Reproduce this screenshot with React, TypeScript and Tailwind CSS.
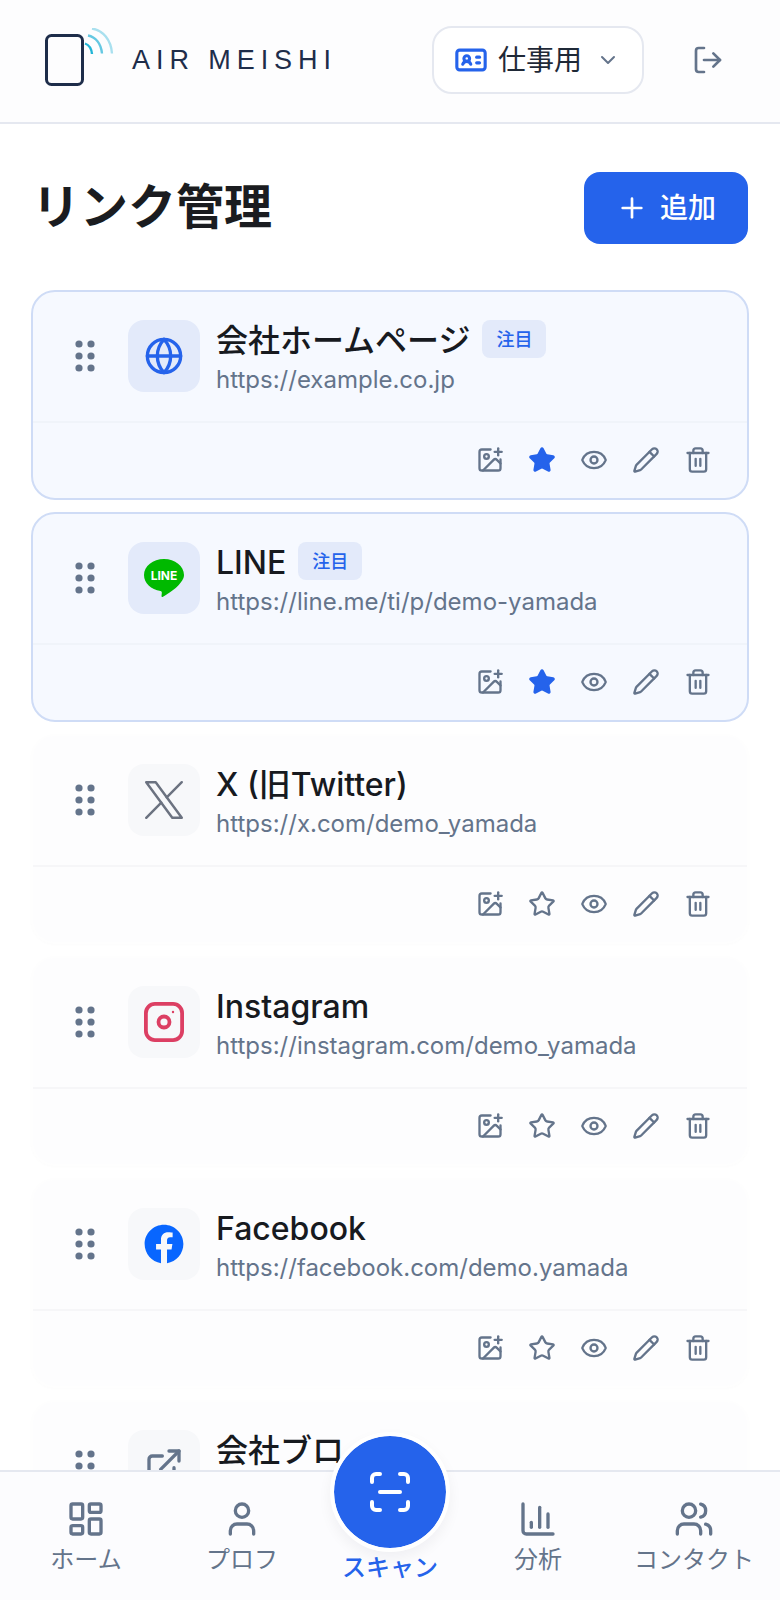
import { ChevronDown, LogOut, Plus, IdCard, Globe, ExternalLink, ImagePlus, Star, Eye, Pencil, Trash2, LayoutDashboard, User, ChartColumn, Users, ScanLine } from 'lucide-react';
import { FaFacebook } from 'react-icons/fa';

const font = { fontFamily: 'Inter, "Noto Sans CJK JP", sans-serif' };

function Grip() {
  const dots = [];
  for (const cx of [4, 16]) {
    for (const cy of [4, 16, 28]) {
      dots.push(<circle key={`${cx}-${cy}`} cx={cx} cy={cy} r="3.6" fill="#64748b" />);
    }
  }
  return (
    <svg width="20" height="32" viewBox="0 0 20 32" className="mb-[2px] shrink-0">
      {dots}
    </svg>
  );
}

function LineIcon() {
  return (
    <svg width="40" height="40" viewBox="0 0 40 40">
      <path d="M20 1C9 1 0 8 0 17c0 8 7 14.500 16.500 16 1 .2 1.500 1 1.300 2l-.3 3c-.1 1 .6 1.300 1.500.8 3-1.800 10-6 14.500-10.500C37 24.500 40 21 40 17 40 8 31 1 20 1z" fill="#00b900" />
      <text x="20" y="21.500" textAnchor="middle" fontSize="12" fontWeight="700" fill="#ffffff" fontFamily="Inter, sans-serif">
        LINE
      </text>
    </svg>
  );
}

function XIcon() {
  return (
    <svg width="40" height="40" viewBox="3 3 18 18" fill="none" stroke="#6b7280" strokeWidth="1.100" strokeLinecap="round" strokeLinejoin="round">
      <path d="M4 4l11.733 16h4.267l-11.733 -16z" />
      <path d="M4 20l6.768 -6.768m2.46 -2.46l6.772 -6.772" />
    </svg>
  );
}

function InstagramIcon() {
  return (
    <svg width="40" height="40" viewBox="0 0 40 40" fill="none" stroke="#dc3f63" strokeWidth="3.800">
      <rect x="1.900" y="1.900" width="36.200" height="36.200" rx="9" />
      <circle cx="20" cy="20" r="5.500" />
      <circle cx="29" cy="10" r="1.200" fill="#dc3f63" stroke="none" />
    </svg>
  );
}

const links = [
  { title: '会社ホームページ', url: 'https://example.co.jp', featured: true, icon: <Globe size={40} color="#2563eb" /> },
  { title: 'LINE', url: 'https://line.me/ti/p/demo-yamada', featured: true, icon: <LineIcon /> },
  { title: 'X (旧Twitter)', url: 'https://x.com/demo_yamada', featured: false, icon: <XIcon /> },
  { title: 'Instagram', url: 'https://instagram.com/demo_yamada', featured: false, icon: <InstagramIcon /> },
  { title: 'Facebook', url: 'https://facebook.com/demo.yamada', featured: false, icon: <FaFacebook size={40} color="#0866ff" /> },
  { title: '会社ブロ', url: 'https://example.co.jp/blog', featured: false, icon: <ExternalLink size={40} color="#64748b" /> },
];

function LinkCard({ link }: any) {
  return (
    <div
      className={`-mx-px rounded-[24px] border-2 ${
        link.featured
          ? 'border-[#cfdcf6] bg-[#f6f9ff]'
          : 'border-[#fefefe] bg-[#fdfdfe] shadow-[0_1px_3px_rgba(15,23,42,0.015)]'
      }`}
    >
      <div className="flex h-[129px] items-center pl-[42px] pr-6">
        <Grip />
        <div
          className={`mb-px ml-[33px] flex h-[72px] w-[72px] shrink-0 items-center justify-center rounded-2xl ${
            link.featured ? 'bg-[#e3eafa]' : 'bg-[#f7f8fa]'
          }`}
        >
          {link.icon}
        </div>
        <div className="ml-4 min-w-0 pt-[5px]">
          <div className="flex h-[38px] items-center gap-3">
            <span className="text-[32px] font-medium leading-[38px] text-[#171a1f]">{link.title}</span>
            {link.featured && (
              <span className="-mt-[4px] flex h-[38px] w-[64px] items-center justify-center rounded-lg bg-[#e3eafa] text-[18px] font-medium text-[#2563eb]">
                注目
              </span>
            )}
          </div>
          <p className="mt-[4px] text-2xl leading-8 text-[#64748b]">{link.url}</p>
        </div>
      </div>
      <div className={`flex h-[77px] items-center justify-end pb-[2px] pr-[23px] border-t-2 ${link.featured ? 'border-[#f0f4fa]' : 'border-[#f6f6f8]'}`}>
        <ActionIcon><ImagePlus size={28} /></ActionIcon>
        <ActionIcon>
          {link.featured ? <Star size={28} color="#2563eb" fill="#2563eb" /> : <Star size={28} />}
        </ActionIcon>
        <ActionIcon><Eye size={28} /></ActionIcon>
        <ActionIcon><Pencil size={28} /></ActionIcon>
        <ActionIcon><Trash2 size={28} /></ActionIcon>
      </div>
    </div>
  );
}

function ActionIcon({ children }: any) {
  return <div className="flex h-[52px] w-[52px] items-center justify-center text-[#64748b]">{children}</div>;
}

function NavItem({ icon: Icon, label }: any) {
  return (
    <div className="flex flex-col items-center pt-[27px] text-[#64748b]">
      <Icon size={40} strokeWidth={2} />
      <span className="mt-[5px] whitespace-nowrap text-2xl leading-8">{label}</span>
    </div>
  );
}

export default function App() {
  return (
    <div className="relative h-[1600px] w-[780px] overflow-hidden bg-white" style={font}>
      <header className="flex h-[124px] items-center border-b-2 border-[#e5e8f0] bg-[#fdfdfe] pl-[44px] pr-[56px]">
        <svg width="72" height="62" viewBox="0 0 72 62" fill="none" className="mb-[5px] shrink-0">
          <rect x="2.500" y="7.500" width="36" height="49" rx="5" stroke="#1e2d4a" strokeWidth="3" />
          <path d="M41 15.500c4 1.500 6.500 5 7 10.500" stroke="#22b5d6" strokeWidth="2.400" />
          <path d="M44 7.500c7.500 1.500 13 8 14 18" stroke="#65c8e2" strokeWidth="2.400" />
          <path d="M48 0.500c11 2 19 11 20 25" stroke="#a9e0ef" strokeWidth="2.400" />
        </svg>
        <span
          className="mb-[2px] ml-[16px] text-[27px] leading-none tracking-[0.22em] text-[#1e2d4a]"
          style={{ fontFamily: '"Liberation Sans", Arial, sans-serif' }}
        >
          AIR MEISHI
        </span>
        <div className="mb-[2px] ml-auto flex h-[68px] w-[212px] items-center rounded-[20px] border-2 border-[#e5e8f0] bg-white pl-[20px]">
          <IdCard size={34} color="#2563eb" strokeWidth={2.200} />
          <span className="ml-[10px] text-[28px] leading-none text-[#1f2937]">仕事用</span>
          <ChevronDown size={24} color="#64748b" className="ml-[14px]" />
        </div>
        <LogOut size={32} color="#64748b" className="mb-[2px] ml-[48px]" />
      </header>

      <main className="px-8 pt-[48px]">
        <div className="flex h-[72px] items-start justify-between">
          <h1 className="text-5xl leading-[70px] font-bold text-[#1a1c20]">リンク管理</h1>
          <button className="flex h-[72px] w-[164px] items-center justify-center gap-[12px] rounded-2xl bg-[#2563eb] text-[28px] font-medium text-white">
            <Plus size={32} />
            追加
          </button>
        </div>
        <div className="mt-[46px] flex flex-col gap-[12px]">
          {links.map((link) => (
            <LinkCard key={link.title} link={link} />
          ))}
        </div>
      </main>

      <nav className="absolute inset-x-0 bottom-0 grid h-[130px] grid-cols-[156px_156px_140px_156px_156px] border-t-2 border-[#e5e8f0] bg-[#fcfcfe] px-2">
        <NavItem icon={LayoutDashboard} label="ホーム" />
        <NavItem icon={User} label="プロフ" />
        <div className="relative flex flex-col items-center">
          <div className="absolute top-[-40px] flex h-[120px] w-[120px] items-center justify-center rounded-full border-[4px] border-white bg-[#2563eb] bg-clip-padding shadow-[0_6px_14px_rgba(15,23,42,0.05)]">
            <ScanLine size={48} color="#ffffff" />
          </div>
          <span className="mt-[80px] whitespace-nowrap text-2xl font-medium leading-8 text-[#2563eb]">スキャン</span>
        </div>
        <NavItem icon={ChartColumn} label="分析" />
        <NavItem icon={Users} label="コンタクト" />
      </nav>
    </div>
  );
}
